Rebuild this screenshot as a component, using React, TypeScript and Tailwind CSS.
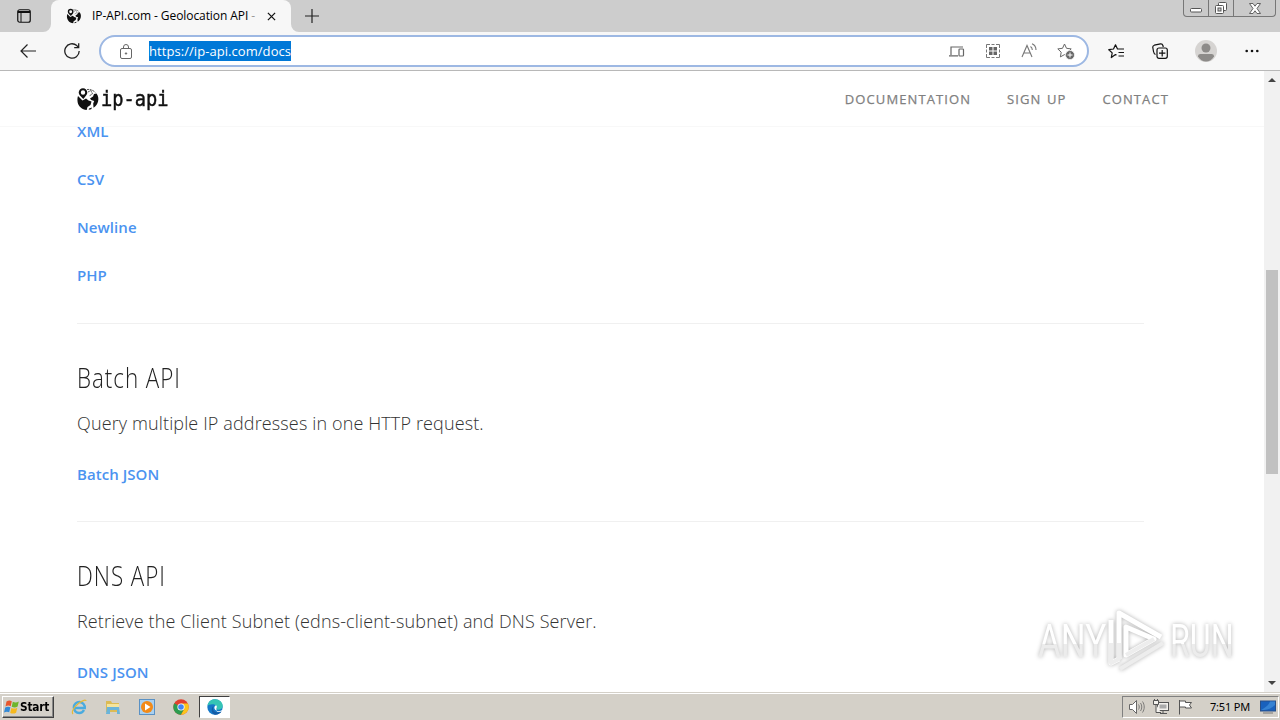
import type { ReactNode } from "react";

const FORMATS = ["XML", "CSV", "Newline", "PHP"];

interface SectionProps {
  title: ReactNode;
  text: ReactNode;
  link: ReactNode;
}

function GlobeLogo({ className }: { className: string }) {
  return (
    <svg viewBox="0 0 22 24" className={className} aria-hidden>
      <path
        fillRule="evenodd"
        d="M6 1.200a4.300 4.300 0 0 1 4.300 4.300c0 1.800-1.500 3.700-4 6.500C3.500 9.300 1.700 7.300 1.700 5.500A4.300 4.300 0 0 1 6 1.200zM6 3.300a2.200 2.200 0 1 0 0 4.400 2.200 2.200 0 0 0 0-4.400z"
        fill="#111"
      />
      <path d="M1 9l4.500 4.500 3.500-2 2.500 2 3 1-1 3.500-3 2-.8 3C5 22.500 1.500 19.500.7 15.500.3 13 .3 11 1 9z" fill="#111" />
      <path d="M13 11.500l3-2 1-2.500 2.500-.5c1.700 2.300 2.300 5 1.600 7.800-.6 2.700-2.200 4.900-4.600 6.400l-.3-4.200 1-2.500-3-1z" fill="#111" />
      <path d="M12 21.500l3-1-.8 1.700-2.500.6z" fill="#111" />
      <path d="M10 2.500c3.200-.4 6 .6 8.300 2.900M11 5l3-1.500 1.500 3.500-3.500 2" fill="none" stroke="#444" strokeWidth="0.900" strokeDasharray="2 0.700" />
    </svg>
  );
}

function TabStrip() {
  return (
    <div className="flex h-8 shrink-0 items-stretch bg-[#cdcdcd]">
      <div className="flex w-[43px] items-center justify-end pr-[12px]">
        <svg viewBox="0 0 14 14" className="h-[14px] w-[14px]">
          <rect x="0.75" y="0.75" width="12.500" height="12.500" rx="2" fill="none" stroke="#111" strokeWidth="1.200" />
          <path d="M1 2h12v2H1z" fill="#111" />
          <path d="M4 4v9" stroke="#111" />
        </svg>
      </div>
      <svg viewBox="0 0 8 32" className="h-8 w-2">
        <path d="M8 24v8H0a8 8 0 0 0 8-8z" fill="#f7f7f7" />
      </svg>
      <div className="flex w-[240px] items-center rounded-t-lg bg-[#f7f7f7] pl-[15px]">
        <GlobeLogo className="h-4 w-4" />
        <span className="ml-[10px] w-[170px] whitespace-nowrap text-[12px] leading-4 tracking-[-0.08px] text-black">
          IP-API.com - Geolocation API <span className="text-[#999]">-</span>
        </span>
        <svg viewBox="0 0 10 10" className="ml-[5px] h-[9px] w-[9px]">
          <path d="M1 1l8 8M9 1L1 9" stroke="#111" strokeWidth="1.400" />
        </svg>
      </div>
      <svg viewBox="0 0 8 32" className="h-8 w-2">
        <path d="M0 24v8h8a8 8 0 0 1-8-8z" fill="#f7f7f7" />
      </svg>
      <svg viewBox="0 0 14 14" className="ml-[6px] mt-[9px] h-[14px] w-[14px]">
        <path d="M7 0v14M0 7h14" stroke="#222" strokeWidth="1.200" />
      </svg>
      <div className="ml-auto mr-[4px] flex h-[17px] w-[93px] overflow-hidden rounded-b border border-t-0 border-[#777] bg-[#cacaca]">
        <div className="flex w-[25px] items-center justify-center border-r border-[#777]">
          <svg viewBox="0 0 12 5" className="mt-[5px] h-[5px] w-3">
            <rect x="0.5" y="0.5" width="11" height="3.500" rx="1" fill="#fff" stroke="#555" />
          </svg>
        </div>
        <div className="flex w-[25px] items-center justify-center border-r border-[#777]">
          <svg viewBox="0 0 12 12" className="h-3 w-3">
            <rect x="3.500" y="0.500" width="8" height="8" rx="1" fill="#fff" stroke="#555" />
            <rect x="0.500" y="3.500" width="8" height="8" rx="1" fill="#fff" stroke="#555" />
            <rect x="3" y="6" width="3" height="3" fill="#ccc" stroke="#555" />
          </svg>
        </div>
        <div className="flex flex-1 items-center justify-center">
          <svg viewBox="0 0 12 11" className="h-[11px] w-3">
            <path d="M.5.500h3.500L6 3.200 8 .5h3.500L8 5.500l3.500 5H8L6 7.800 4 10.500H.5L4 5.500z" fill="#fff" stroke="#555" strokeWidth="0.900" />
          </svg>
        </div>
      </div>
    </div>
  );
}

function ToolButton({ children }: { children: ReactNode }) {
  return <div className="flex w-11 shrink-0 items-center justify-center">{children}</div>;
}

const STAR = "M7.500 1l2 4.300 4.700.6-3.400 3.300.8 4.700-4.100-2.300-4.100 2.300.8-4.700L.8 5.900l4.700-.6z";

function Toolbar() {
  return (
    <div className="flex h-[39px] shrink-0 items-stretch border-b border-[#b8b8b8] bg-[#f7f7f7] pl-[6px]">
      <ToolButton>
        <svg viewBox="0 0 16 14" className="h-[14px] w-4" fill="none" stroke="#222" strokeWidth="1.200">
          <path d="M16 7H1M7.500.5L1 7l6.500 6.500" />
        </svg>
      </ToolButton>
      <ToolButton>
        <svg viewBox="0 0 16 16" className="h-4 w-4" fill="none" stroke="#222" strokeWidth="1.300">
          <path d="M15.200 8A7.200 7.200 0 1 1 12.800 2.600L14.500 4.500M14.700.3v4.400h-4.500" />
        </svg>
      </ToolButton>
      <div className="ml-[5px] mt-[3px] flex h-8 w-[990px] items-center rounded-full border-2 border-[#9db8e3] bg-white pl-[19px] pr-3">
        <svg viewBox="0 0 12 15" className="h-[15px] w-3" fill="none" stroke="#666">
          <rect x="0.5" y="4.500" width="11" height="10" rx="1.500" />
          <path d="M3.500 4.500V3a2.500 2.500 0 0 1 5 0v1.500" />
          <circle cx="6" cy="9.500" r="0.700" fill="#666" />
        </svg>
        <span className="ml-[17px] h-5 w-[142px] whitespace-nowrap bg-[#0078d7] text-[13px] leading-5 tracking-[0.06px] text-white">
          https://ip-api.com/docs
        </span>
        <div className="ml-auto flex items-center gap-5">
          <svg viewBox="0 0 16 11" className="h-[11px] w-4" fill="none" stroke="#666" strokeWidth="1.200">
            <path d="M2 9V1h12M0 9.800h9" />
            <rect x="10" y="3" width="4.500" height="7" rx="0.800" />
          </svg>
          <svg viewBox="0 0 16 16" className="h-4 w-4" fill="none" stroke="#777">
            <path d="M5 1.500H1.500V5M11 1.500h3.500V5M1.500 11v3.500H5M14.500 11v3.500H11M1.500 6.500v3M14.500 6.500v3M6.500 1.500h3M6.500 14.500h3" />
            <path d="M4 4h3.500v3.500H4zM8.500 4H12v3.500H8.500zM4 8.500h3.500V12H4zM8.500 8.500H12V12H8.500z" fill="#666" stroke="none" />
          </svg>
          <svg viewBox="0 0 16 16" className="h-4 w-4" fill="none" stroke="#777" strokeWidth="1.100">
            <path d="M1 14L6 2.500 11 14M3 10h6M9.500 3.500c1.200.8 1.800 2 1.800 3.500M11 .8c2.500 1 4 3.200 4 6.200" />
          </svg>
          <svg viewBox="0 0 18 17" className="h-[17px] w-[18px]" fill="none" stroke="#666">
            <path d={STAR} strokeLinejoin="round" />
            <circle cx="13" cy="12" r="4.500" fill="#666" stroke="#fff" strokeWidth="0.700" />
            <path d="M13 9.500v5M10.500 12h5" stroke="#fff" />
          </svg>
        </div>
      </div>
      <div className="ml-[5px] flex">
        <ToolButton>
          <svg viewBox="0 0 17 15" className="h-[15px] w-[17px]" fill="none" stroke="#111" strokeWidth="1.200">
            <path d="M8.500 10.800l-1-.2-4.200 3 .9-4.700L.8 5.700l4.700-.7 2-4.200 2 4.200h6.500M10.500 8.500H16M10.500 12H16" strokeLinejoin="round" />
          </svg>
        </ToolButton>
        <ToolButton>
          <svg viewBox="0 0 16 16" className="h-4 w-4" fill="none" stroke="#111" strokeWidth="1.200">
            <path d="M3.500 11.500C2 11 1.800 10 1.500 8.500L.8 4.500c-.2-1.500.5-2 1.500-2.300L8.500.9c1.300-.2 2 .3 2.400 1.600l.4 1.500" />
            <rect x="5" y="5" width="10.300" height="10.300" rx="2" />
            <path d="M10.200 7v6.400M7 10.200h6.400" />
          </svg>
        </ToolButton>
        <div className="flex w-12 items-center justify-center">
          <svg viewBox="0 0 22 22" className="h-[22px] w-[22px]">
            <circle cx="11" cy="11" r="11" fill="#d6d4d2" />
            <circle cx="11" cy="8" r="4.500" fill="#8d8b89" />
            <path d="M3 16.500c0-1.700 1-2.500 2.500-2.500h11c1.500 0 2.500.8 2.500 2.500-1.700 3-4.700 5-8 5s-6.300-2-8-5z" fill="#8d8b89" />
          </svg>
        </div>
        <ToolButton>
          <svg viewBox="0 0 14 4" className="h-1 w-[14px]" fill="#111">
            <circle cx="1.700" cy="2" r="1.300" />
            <circle cx="7" cy="2" r="1.300" />
            <circle cx="12.300" cy="2" r="1.300" />
          </svg>
        </ToolButton>
      </div>
    </div>
  );
}

function SiteHeader() {
  return (
    <header className="flex h-14 shrink-0 items-center border-b border-[#f8f8f8] bg-white pl-[77px] pr-[95px]">
      <GlobeLogo className="h-6 w-[22px]" />
      <span className="ml-[2px] inline-block h-7 w-[68px] origin-left scale-x-[0.85] whitespace-nowrap font-['DejaVu_Sans_Mono',monospace] text-[22px] leading-7 text-[#111] [-webkit-text-stroke:0.5px_#111]">
        ip-api
      </span>
      <nav className="ml-auto flex gap-9 pt-[2px] text-[13px] tracking-[1.1px] text-[#808080] [-webkit-text-stroke:0.25px_#808080]">
        <span>DOCUMENTATION</span>
        <span className="[word-spacing:1px]">SIGN UP</span>
        <span>CONTACT</span>
      </nav>
    </header>
  );
}

function Section({ title, text, link }: SectionProps) {
  return (
    <section className="h-[198px] border-t border-[#f0f0f0] pt-[34px]">
      <h2 className="h-10 origin-left scale-x-[0.8] whitespace-nowrap text-[28px] font-light leading-[39px] tracking-[1.2px] text-[#222]">
        {title}
      </h2>
      <p className="mt-[11px] h-7 whitespace-nowrap text-[18px] font-light leading-7 tracking-[0.13px] text-[#333]">{text}</p>
      <p className="mt-[25px] h-6 text-[15px] font-semibold leading-[25px] tracking-[0.06px] text-[#4b93f0]">{link}</p>
    </section>
  );
}

function Watermark() {
  return (
    <div className="absolute right-[45px] top-[609px] flex items-center [filter:drop-shadow(0_0_2px_#b0b0b0)]">
      <span className="mr-[5px] inline-block w-[64px] font-['Roboto',sans-serif]">
        <span className="inline-block origin-left scale-x-[0.76] bg-linear-to-b from-white from-55% to-[#ececec] to-55% bg-clip-text text-[46px] leading-[62px] text-transparent">
          ANY
        </span>
      </span>
      <svg viewBox="0 0 60 64" className="mr-[3px] h-16 w-[60px]" fill="none" stroke="#fff" strokeWidth="5" strokeLinejoin="round">
        <path d="M4 11v43l8-4M12 50V4l42 24M19 18v28l28-16z" />
        <path d="M4 34v20l8-4V34M13 60l43-26M19 46l28-16" stroke="#ededed" strokeWidth="4" />
      </svg>
      <span className="inline-block w-[65px] font-['Roboto',sans-serif]">
        <span className="inline-block origin-left scale-x-[0.7] bg-linear-to-b from-white from-55% to-[#ececec] to-55% bg-clip-text text-[46px] leading-[62px] text-transparent">
          RUN
        </span>
      </span>
    </div>
  );
}

function Scrollbar() {
  return (
    <div className="flex w-4 shrink-0 flex-col items-center bg-[#f1f1f1]">
      <svg viewBox="0 0 8 4" className="mt-[7px] h-1 w-2">
        <path d="M0 4l4-4 4 4z" fill="#444" />
      </svg>
      <div className="mt-[188px] h-[204px] w-3 bg-[#c1c1c1]" />
      <svg viewBox="0 0 8 4" className="mb-[7px] mt-auto h-1 w-2">
        <path d="M0 0l4 4 4-4z" fill="#444" />
      </svg>
    </div>
  );
}

function Taskbar() {
  return (
    <footer className="flex h-7 shrink-0 items-start border-t border-[#d4d0c8] bg-[#d4d0c8] pl-[2px] font-['DejaVu_Sans','Noto_Sans',sans-serif] shadow-[inset_0_1px_0_#fff]">
      <div className="mt-[3px] flex h-[22px] w-[52px] items-center border border-b-[#404040] border-l-white border-r-[#404040] border-t-white pl-px shadow-[inset_-1px_-1px_0_#888]">
        <svg viewBox="0 0 16 16" className="h-4 w-4">
          <path d="M2.500 2.500C4.500 1.200 6 1.200 7.800 2.200L6.700 7.200C5 6.300 3.300 6.400 1.500 7.500z" fill="#e8562c" />
          <path d="M8.800 2.800c2 1 4 .9 6-.3l-1.200 5c-1.800 1.100-3.700 1.200-5.900.2z" fill="#6fb52c" />
          <path d="M1.200 8.600c1.800-1.100 3.500-1.200 5.200-.3l-1.200 5c-1.700-.9-3.400-.8-5.200.3z" fill="#3389d6" />
          <path d="M7.400 8.900c2.100 1 4 .9 5.900-.2l-1.200 5c-1.900 1.100-3.800 1.200-5.900.2z" fill="#f6b91e" />
        </svg>
        <span className="origin-left scale-x-[0.92] whitespace-nowrap text-[11.500px] font-bold leading-4 tracking-[-0.2px] text-black">Start</span>
      </div>
      <div className="ml-[17px] mt-[6px] flex gap-[18px]">
        <svg viewBox="0 0 16 16" className="h-4 w-4" fill="none">
          <path d="M13 11c-1 2-2.600 3-4.700 3a5.500 5.500 0 1 1 5.500-5H4" stroke="#4aabdf" strokeWidth="2.400" />
          <path d="M2 15c-2-2 1-7 6-11 4-3 7-3.500 7-2" stroke="#e6b936" strokeWidth="1.200" />
        </svg>
        <svg viewBox="0 0 16 16" className="h-4 w-4">
          <path d="M1 2h5l1 2h7v9H1z" fill="#dcbb55" />
          <path d="M2 5h12v6H2z" fill="#f5e49c" />
          <path d="M2 8h12l1 7h-3v-4H5v4H1z" fill="#6ab4da" />
        </svg>
        <svg viewBox="0 0 16 16" className="h-4 w-4">
          <rect x="0.500" y="0.500" width="15" height="15" fill="#a9d0f0" stroke="#5a91c4" />
          <circle cx="8" cy="8" r="6" fill="#f28a18" />
          <path d="M6 4.500L11.500 8 6 11.500z" fill="#fff" />
        </svg>
        <svg viewBox="0 0 16 16" className="h-4 w-4">
          <circle cx="8" cy="8" r="7.700" fill="#e2402f" />
          <path d="M8 8L1.300 4.200A7.700 7.700 0 0 0 8 15.700L11.300 10z" fill="#2d9c50" />
          <path d="M8 4.500h6.900A7.700 7.700 0 0 1 8 15.700L11.300 10z" fill="#fbc51c" />
          <circle cx="8" cy="8" r="3.600" fill="#fff" />
          <circle cx="8" cy="8" r="2.800" fill="#4285f4" />
        </svg>
      </div>
      <div className="ml-[10px] mt-[3px] flex h-[22px] w-[31px] items-center justify-center border border-b-white border-l-[#404040] border-r-white border-t-[#404040] bg-white">
        <svg viewBox="0 0 16 16" className="h-4 w-4">
          <circle cx="8" cy="8" r="7.700" fill="#1478c8" />
          <path d="M.5 7C1 3 4 .3 8 .3c4.500 0 7.700 3 7.700 6.500 0 2.700-2 4-4.500 4-1.700 0-2.400-.7-1.700-1.700C10.500 7 8 5.200 5.500 5.200 3 5.200 1.200 6 .5 7z" fill="#35c5b5" />
          <path d="M6.500 7c-1.700 3 .5 6.500 4.500 6.500 1.500 0 2.800-.5 3.800-1.200-1.500 2.300-4 3.500-6.800 3.400C4.500 15 3.500 9 6.500 7z" fill="#145ba5" />
          <path d="M9.500 9c.8-1 .4-2-.5-2.700-2.200 1-2.200 4 .3 5.300 2 1 4.500.6 6.700-.9v3.300l-1.200-1.700c-1.500.7-4 1-5.800.2 2.800.5-.3-1.500.5-3.500z" fill="#fff" />
        </svg>
      </div>
      <div className="ml-auto mr-px mt-[3px] flex h-[22px] w-[157px] items-center border border-b-white border-l-[#808080] border-r-white border-t-[#808080] pl-[6px]">
        <svg viewBox="0 0 16 14" className="h-[14px] w-4" fill="#fff" stroke="#666">
          <path d="M.5 4.500h3l4-4v13l-4-4h-3z" />
          <path d="M9.500 4.500c1 1.500 1 3.500 0 5M11.500 3c1.700 2.300 1.700 5.700 0 8M13.500 1.500c2.300 3.300 2.300 7.700 0 11" fill="none" strokeWidth="0.800" />
        </svg>
        <svg viewBox="0 0 16 16" className="ml-[8px] h-4 w-4" fill="#f3f1ed" stroke="#555">
          <rect x="4.500" y="3.500" width="11" height="8" />
          <rect x="6.500" y="5.500" width="7" height="4" fill="#aaa" stroke="none" />
          <path d="M.5 1.500h5v4h-5zM3 5.500v8h5M7 14.500h7M10 11.500v3M1.500 0v2M4.500 0v2" />
        </svg>
        <svg viewBox="0 0 16 16" className="ml-[8px] h-4 w-4" fill="#fff" stroke="#555">
          <path d="M2.500 1v14.500M2.500 2h6v1.500h6L12.500 6l2 3h-6V8h-6z" />
        </svg>
        <span className="ml-[17px] w-[41px] whitespace-nowrap font-['Noto_Sans',sans-serif] text-[11px] leading-4 tracking-[-0.2px] text-black">
          7:51 PM
        </span>
        <svg viewBox="0 0 16 14" className="ml-[9px] h-[14px] w-4">
          <rect x="0.500" y="1" width="15" height="10" fill="#1961bd" stroke="#294f87" />
          <path d="M1 10C5 8 9 5 10 1.500h5V5c-4 4-8 5-14 5z" fill="#3582d3" />
          <path d="M3 13h10" stroke="#777" />
        </svg>
      </div>
    </footer>
  );
}

export default function App() {
  return (
    <div className="relative flex h-[720px] w-[1280px] flex-col overflow-hidden bg-white font-['Open_Sans','Noto_Sans',sans-serif]">
      <TabStrip />
      <Toolbar />
      <div className="flex min-h-0 flex-1">
        <div className="flex min-w-0 flex-1 flex-col">
          <SiteHeader />
          <main className="min-h-0 flex-1 overflow-hidden pl-[77px]">
            <div className="-mt-[8px] w-[1067px]">
              <ul className="flex h-[204px] flex-col gap-6 text-[15px] font-semibold leading-6 tracking-[0.06px] text-[#4b93f0]">
                {FORMATS.map((name) => (
                  <li key={name}>{name}</li>
                ))}
              </ul>
              <Section title="Batch API" text="Query multiple IP addresses in one HTTP request." link="Batch JSON" />
              <Section
                title="DNS API"
                text="Retrieve the Client Subnet (edns-client-subnet) and DNS Server."
                link="DNS JSON"
              />
            </div>
          </main>
        </div>
        <Scrollbar />
      </div>
      <Taskbar />
      <Watermark />
    </div>
  );
}
